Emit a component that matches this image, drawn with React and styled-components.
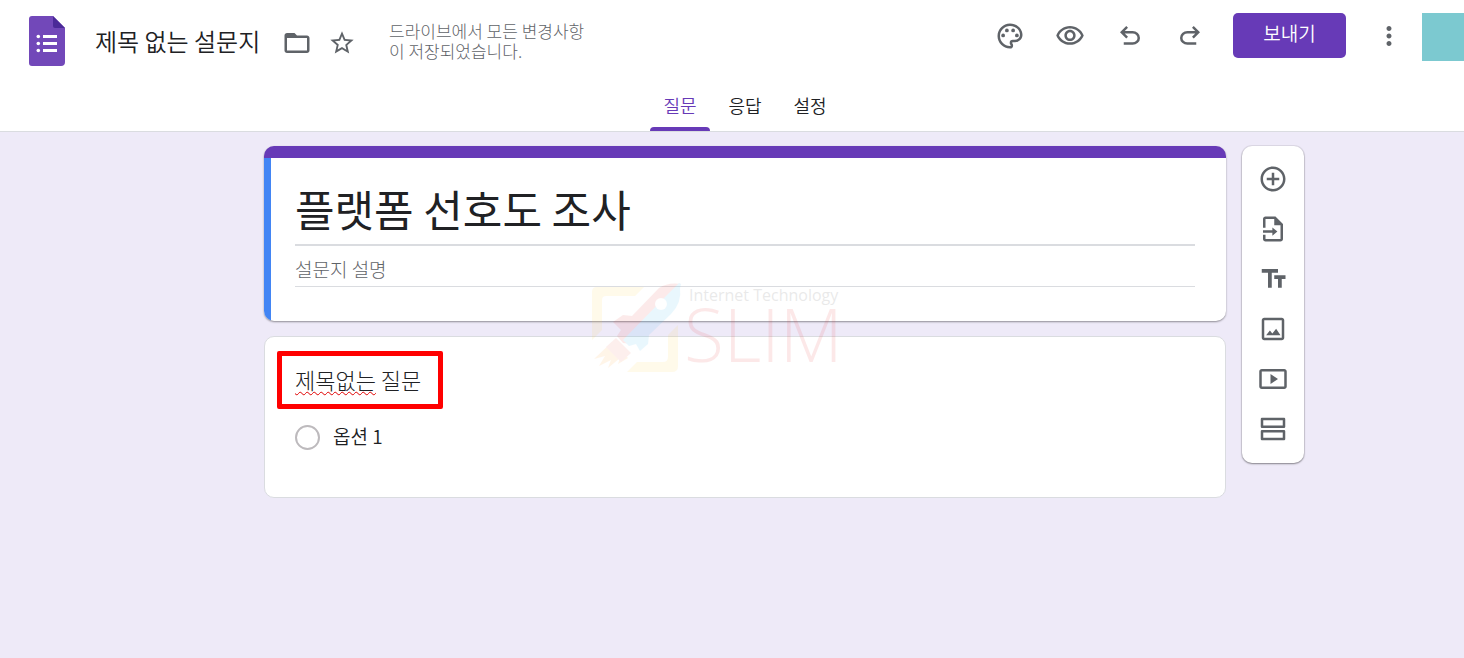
import React from "react";
import styled, { createGlobalStyle } from "styled-components";

const purple = "#673ab7";
const ink = "#202124";
const grey = "#5f6368";
const line = "#dadce0";

const GlobalStyle = createGlobalStyle`
  *, *::before, *::after { box-sizing: border-box; }
  body {
    margin: 0;
    min-height: 100vh;
    background: #eeeaf8;
    color: ${ink};
    font-family: "Noto Sans CJK KR", sans-serif;
    font-weight: 350;
  }
  button, input { font: inherit; color: inherit; }
`;

const Header = styled.header`
  background: #fff;
  border-bottom: 1px solid ${line};
`;

const TopRow = styled.div`
  display: flex;
  align-items: flex-start;
  justify-content: space-between;
  padding: 13px 0 0 28px;
`;

const DocumentInfo = styled.div`
  display: flex;
  align-items: center;
  height: 56px;
`;

const HomeLink = styled.a`
  display: flex;
  margin-right: 28px;
`;

const DocumentName = styled.input`
  width: 180px;
  height: 36px;
  padding: 0 1px 2px;
  border: 0;
  outline: 0;
  background: none;
  font-size: 24px;
  line-height: 34px;
`;

const SaveState = styled.p`
  width: 200px;
  margin: 0 0 0 25px;
  color: ${grey};
  font-size: 17px;
  line-height: 20px;
  font-weight: 300;
  word-break: break-all;
`;

const Actions = styled.div`
  display: flex;
  align-items: flex-start;
  gap: 19px;
`;

const ActionGroup = styled.div`
  display: flex;
  align-items: flex-start;
  gap: ${(p) => p.$gap}px;
  padding-top: ${(p) => p.$top || 0}px;
`;

const IconButton = styled.button`
  display: flex;
  align-items: center;
  justify-content: center;
  width: ${(p) => p.$width || 48}px;
  height: ${(p) => p.$height || 45}px;
  padding: 0;
  border: 0;
  background: none;
  color: ${grey};
  cursor: pointer;
`;

const SendButton = styled.button`
  width: 113px;
  height: 45px;
  padding: 0 0 6px;
  border: 0;
  border-radius: 5px;
  background: ${purple};
  color: #fff;
  font-size: 19px;
  line-height: 28px;
  cursor: pointer;
`;

const Avatar = styled.div`
  width: 42px;
  height: 48px;
  background: #7cc9d0;
`;

const Tabs = styled.nav`
  display: flex;
  justify-content: center;
  gap: 5px;
  padding: 13px 0 0 26px;
`;

const Tab = styled.a`
  display: flex;
  flex-direction: column;
  justify-content: space-between;
  align-items: center;
  width: 60px;
  height: 49px;
  padding-top: 9px;
  color: ${(p) => (p.$active ? purple : ink)};
  font-size: 18px;
  line-height: 28px;
  text-decoration: none;

  &::after {
    content: "";
    width: 100%;
    height: 4px;
    border-radius: 4px 4px 0 0;
    background: ${(p) => (p.$active ? purple : "transparent")};
  }
`;

const Main = styled.main`
  display: grid;
  grid-template-columns: minmax(32px, 1fr) minmax(0, 962px) minmax(78px, 1fr);
  align-items: start;
  padding: 14px 0 40px 26px;
`;

const FormColumn = styled.div`
  position: relative;
  grid-column: 2;
  display: flex;
  flex-direction: column;
  gap: 15px;
`;

const TitleCard = styled.section`
  overflow: hidden;
  border-top: 12px solid ${purple};
  border-radius: 10px;
  background: #fff;
  box-shadow: 0 1px 2px rgba(0, 0, 0, 0.4);
`;

const TitleBody = styled.div`
  display: flex;
  flex-direction: column;
  height: 163px;
  padding: 22px 31px 0 24px;
  border-left: 7px solid #4285f4;
`;

const FormTitle = styled.input`
  width: 100%;
  height: 66px;
  padding: 0 0 8px;
  border: 0;
  border-bottom: 2px solid ${line};
  outline: 0;
  background: none;
  font-size: 43px;
  line-height: 56px;
  font-weight: 400;
`;

const FormDescription = styled.input`
  width: 100%;
  height: 41px;
  padding: 4px 0 0;
  border: 0;
  border-bottom: 1px solid ${line};
  outline: 0;
  background: none;
  font-size: 19px;
  line-height: 28px;
  font-weight: 300;

  &::placeholder { color: ${grey}; opacity: 1; }
`;

const QuestionCard = styled.section`
  display: flex;
  flex-direction: column;
  align-items: flex-start;
  min-height: 162px;
  padding: 14px 12px 40px;
  border: 1px solid ${line};
  border-radius: 10px;
  background: #fff;
`;

const QuestionTitle = styled.h2`
  margin: 0;
  padding: 9px 17px 11px 13px;
  border: 5px solid #f00;
  border-radius: 2px;
  font-size: 22px;
  line-height: 28px;
  font-weight: 300;
`;

const Misspelled = styled.span`
  text-decoration: underline wavy #e00000 1px;
  text-underline-offset: 2px;
  text-decoration-skip-ink: none;
`;

const Option = styled.label`
  display: flex;
  align-items: center;
  gap: 13px;
  margin: 14px 0 0 18px;
  font-size: 19px;
  line-height: 28px;
`;

const OptionText = styled.span`
  padding-bottom: 2px;
  line-height: 26px;
`;

const Radio = styled.input`
  appearance: none;
  width: 25px;
  height: 25px;
  margin: 0;
  border: 2px solid #bdbabd;
  border-radius: 50%;
`;

const SideTools = styled.aside`
  grid-column: 3;
  display: flex;
  flex-direction: column;
  align-items: center;
  width: 62px;
  margin-left: 16px;
  padding: 8px 0 9px;
  border-radius: 10px;
  background: #fff;
  box-shadow: 0 1px 2px rgba(0, 0, 0, 0.4), 0 0 0 1px #dfdbe8;
`;

const Watermark = styled.div`
  position: absolute;
  top: 137px;
  left: 328px;
  display: flex;
  opacity: 0.1;
  pointer-events: none;
`;

const WatermarkText = styled.div`
  display: flex;
  flex-direction: column;
  font-family: "Open Sans", sans-serif;
  white-space: nowrap;
`;

const WatermarkTagline = styled.span`
  padding: 2px 0 0 5px;
  color: #333;
  font-size: 16px;
  line-height: 20px;
  font-weight: 400;
`;

const WatermarkName = styled.span`
  color: #e5252a;
  font-size: 73px;
  line-height: 58px;
  font-weight: 300;
`;

function Icon({ size = 30, children }) {
  return (
    <svg width={size} height={size} viewBox="0 0 24 24" fill="currentColor" aria-hidden="true">
      {children}
    </svg>
  );
}

const UNDO =
  "M7 19v-2h7.1q1.575 0 2.738-1T18 13.5 16.838 11 14.1 10H7.8l2.6 2.6L9 14 4 9l5-5 1.4 1.4L7.8 8h6.3q2.425 0 4.163 1.575T20 13.5t-1.737 3.925T14.1 19z";

const icons = {
  folder: <path d="M20 6h-8l-2-2H4c-1.1 0-2 .9-2 2v12c0 1.1.9 2 2 2h16c1.1 0 2-.9 2-2V8c0-1.1-.9-2-2-2zm0 12H4V8h16v10z" />,
  star: <path d="M22 9.24l-7.19-.62L12 2 9.19 8.63 2 9.24l5.46 4.73L5.82 21 12 17.27 18.18 21l-1.63-7.03L22 9.24zM12 15.4l-3.76 2.27 1-4.28-3.32-2.88 4.38-.38L12 6.1l1.71 4.04 4.38.38-3.32 2.88 1 4.28L12 15.4z" />,
  palette: (
    <>
      <path d="M12 22C6.49 22 2 17.51 2 12S6.49 2 12 2s10 4.04 10 9c0 3.31-2.69 6-6 6h-1.77c-.28 0-.5.22-.5.5 0 .12.05.23.13.33.41.47.64 1.06.64 1.67A2.5 2.5 0 0 1 12 22zm0-18c-4.41 0-8 3.59-8 8s3.59 8 8 8c.28 0 .5-.22.5-.5a.54.54 0 0 0-.14-.35c-.41-.46-.63-1.05-.63-1.65a2.5 2.5 0 0 1 2.5-2.5H16c2.21 0 4-1.79 4-4 0-3.86-3.59-7-8-7z" />
      <circle cx="6.5" cy="11.5" r="1.5" />
      <circle cx="9.5" cy="7.5" r="1.5" />
      <circle cx="14.5" cy="7.5" r="1.5" />
      <circle cx="17.5" cy="11.5" r="1.5" />
    </>
  ),
  eye: <path d="M12 6c3.79 0 7.17 2.13 8.82 5.5C19.17 14.87 15.79 17 12 17s-7.17-2.13-8.82-5.5C4.83 8.13 8.21 6 12 6m0-2C7 4 2.73 7.11 1 11.5 2.73 15.89 7 19 12 19s9.27-3.11 11-7.5C21.27 7.11 17 4 12 4zm0 5c1.38 0 2.5 1.12 2.5 2.5S13.38 14 12 14s-2.5-1.12-2.5-2.5S10.62 9 12 9m0-2c-2.48 0-4.5 2.02-4.5 4.5S9.52 16 12 16s4.5-2.02 4.5-4.5S14.48 7 12 7z" />,
  undo: <path d={UNDO} />,
  redo: <path transform="translate(24 0) scale(-1 1)" d={UNDO} />,
  more: <path d="M12 8c1.1 0 2-.9 2-2s-.9-2-2-2-2 .9-2 2 .9 2 2 2zm0 2c-1.1 0-2 .9-2 2s.9 2 2 2 2-.9 2-2-.9-2-2-2zm0 6c-1.1 0-2 .9-2 2s.9 2 2 2 2-.9 2-2-.9-2-2-2z" />,
  add: <path d="M13 7h-2v4H7v2h4v4h2v-4h4v-2h-4V7zm-1-5C6.48 2 2 6.48 2 12s4.48 10 10 10 10-4.48 10-10S17.52 2 12 2zm0 18c-4.41 0-8-3.59-8-8s3.59-8 8-8 8 3.59 8 8-3.59 8-8 8z" />,
  importFile: (
    <>
      <path d="M14 2H6c-1.1 0-2 .9-2 2v7h2V4h7v5h5v11H6v-3.500H4V20c0 1.100.9 2 2 2h12c1.100 0 2-.9 2-2V8z" />
      <path d="M4 13h7.500v-2.300L15.500 14l-4 3.300V15H4z" />
    </>
  ),
  text: <path d="M3 4v3h5v12h3V7h5V4H3zm19 5h-9v3h3v7h3v-7h3V9z" />,
  image: (
    <>
      <path d="M19 3H5c-1.100 0-2 .9-2 2v14c0 1.100.9 2 2 2h14c1.100 0 2-.9 2-2V5c0-1.100-.9-2-2-2zm0 16H5V5h14z" />
      <path d="M6.500 17l3-3.800 2 2.300 3-3.800L18 17z" />
    </>
  ),
  video: <path d="M10 8v8l6-4zM21 4H3c-1.100 0-2 .9-2 2v12c0 1.100.9 2 2 2h18c1.100 0 2-.9 2-2V6c0-1.100-.9-2-2-2zm0 14H3V6h18z" />,
  section: <path d="M20.500 3h-17C2.700 3 2.200 3.400 2.200 4v6.200c0 .6.500 1 1.300 1h17c.8 0 1.300-.4 1.300-1V4c0-.6-.5-1-1.300-1zM19.800 9.200H4.200V5h15.600zM20.500 12.800h-17c-.8 0-1.300.4-1.300 1V20c0 .6.500 1 1.300 1h17c.8 0 1.300-.4 1.300-1v-6.200c0-.6-.5-1-1.300-1zM19.800 19H4.200v-4.200h15.600z" />,
};

const headerTools = [
  ["palette", "테마 맞춤설정"],
  ["eye", "미리보기"],
  ["undo", "실행취소"],
  ["redo", "재실행"],
];

const sideTools = [
  ["add", "질문 추가"],
  ["importFile", "질문 가져오기"],
  ["text", "제목 및 설명 추가"],
  ["image", "이미지 추가"],
  ["video", "동영상 추가"],
  ["section", "섹션 추가"],
];

function FormsLogo() {
  return (
    <svg width="38" height="50" viewBox="0 0 38 50" aria-hidden="true">
      <path d="M4 0h21l12 12v34a4 4 0 0 1-4 4H4a3 3 0 0 1-3-3V3a3 3 0 0 1 3-3z" fill="#7248b9" />
      <path d="M25 0l12 12H27a2 2 0 0 1-2-2z" fill="#4b2a98" />
      <g fill="#fff">
        <circle cx="10.300" cy="20.500" r="1.800" />
        <circle cx="10.300" cy="27.500" r="1.800" />
        <circle cx="10.300" cy="34.500" r="1.800" />
        <path d="M15 19h14v3H15zM15 26h14v3H15zM15 33h14v3H15z" />
      </g>
    </svg>
  );
}

function Rocket() {
  return (
    <svg width="92" height="92" viewBox="0 0 92 92" aria-hidden="true">
      <path d="M0 57V9q0-5 5-5h47l-9 9H14q-4 0-4 4v30z" fill="#ffd23c" />
      <path d="M86 42v41q0 6-6 6H35l10-10h26q5 0 5-5V52z" fill="#ffd23c" />
      <path d="M20 59l16 16-10 6 2-6-12 10 3-8-12 6 6-10-11 3z" fill="#ffa32b" />
      <path d="M24 55l15 15-10 9-15-15z" fill="#f26a5a" />
      <path d="M21 39l10-7 9 1L67 5q9-6 22-4L40 61l-9-1-6-7 4-6z" fill="#e9413b" />
      <path d="M31 57l46-47 10-10 2 1-1 4q2 15-9 26L57 52l-1 9-8 7-4-7-7 2z" fill="#34baf2" />
      <circle cx="69" cy="21" r="6" fill="#fff" />
    </svg>
  );
}

export default function App() {
  return (
    <>
      <GlobalStyle />
      <Header>
        <TopRow>
          <DocumentInfo>
            <HomeLink href="#" aria-label="설문지 홈">
              <FormsLogo />
            </HomeLink>
            <DocumentName aria-label="문서 제목" defaultValue="제목 없는 설문지" />
            <ActionGroup $gap={0} $top={4}>
              <IconButton $width={45} aria-label="폴더로 이동">
                <Icon>{icons.folder}</Icon>
              </IconButton>
              <IconButton $width={45} aria-label="별표">
                <Icon size={28}>{icons.star}</Icon>
              </IconButton>
            </ActionGroup>
            <SaveState>드라이브에서 모든 변경사항이 저장되었습니다.</SaveState>
          </DocumentInfo>
          <Actions>
            <ActionGroup $gap={12}>
              {headerTools.map(([name, label]) => (
                <IconButton key={name} aria-label={label}>
                  <Icon>{icons[name]}</Icon>
                </IconButton>
              ))}
            </ActionGroup>
            <SendButton>보내기</SendButton>
            <ActionGroup $gap={9}>
              <IconButton aria-label="더보기">
                <Icon>{icons.more}</Icon>
              </IconButton>
              <Avatar />
            </ActionGroup>
          </Actions>
        </TopRow>
        <Tabs>
          <Tab href="#questions" $active aria-current="page">질문</Tab>
          <Tab href="#responses">응답</Tab>
          <Tab href="#settings">설정</Tab>
        </Tabs>
      </Header>
      <Main>
        <FormColumn>
          <TitleCard>
            <TitleBody>
              <FormTitle aria-label="설문지 제목" defaultValue="플랫폼 선호도 조사" />
              <FormDescription aria-label="설문지 설명" placeholder="설문지 설명" />
            </TitleBody>
          </TitleCard>
          <QuestionCard>
            <QuestionTitle>
              <Misspelled>제목없는</Misspelled> 질문
            </QuestionTitle>
            <Option>
              <Radio type="radio" name="option" />
              <OptionText>옵션 1</OptionText>
            </Option>
          </QuestionCard>
          <Watermark aria-hidden="true">
            <Rocket />
            <WatermarkText>
              <WatermarkTagline>Internet Technology</WatermarkTagline>
              <WatermarkName>SLIM</WatermarkName>
            </WatermarkText>
          </Watermark>
        </FormColumn>
        <SideTools>
          {sideTools.map(([name, label]) => (
            <IconButton key={name} $width={60} $height={50} aria-label={label}>
              <Icon>{icons[name]}</Icon>
            </IconButton>
          ))}
        </SideTools>
      </Main>
    </>
  );
}
